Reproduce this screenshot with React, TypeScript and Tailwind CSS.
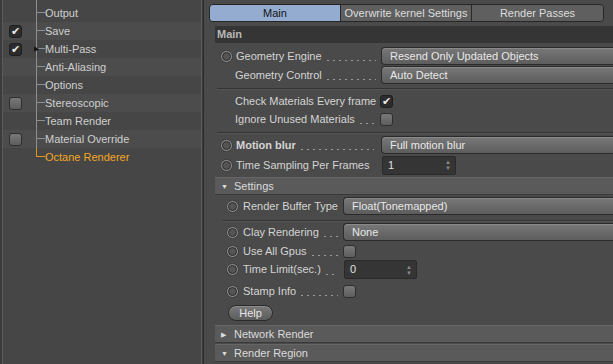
import React from 'react';

const treeItems = [
    { label: 'Output', box: 'none' },
    { label: 'Save', box: 'checked' },
    { label: 'Multi-Pass', box: 'checked', arrow: true },
    { label: 'Anti-Aliasing', box: 'none' },
    { label: 'Options', box: 'none' },
    { label: 'Stereoscopic', box: 'off' },
    { label: 'Team Render', box: 'none' },
    { label: 'Material Override', box: 'off' },
    { label: 'Octane Renderer', box: 'none', active: true },
];

const CheckOn = () => (
    <span className="flex h-[13px] w-[13px] items-center justify-center rounded-[3px] border border-[#1f1f1f] bg-[#2c2c2c] text-[11px] leading-none text-[#e8e8e8]">
        ✔
    </span>
);

const CheckOff = () => (
    <span className="block h-[13px] w-[13px] rounded-[3px] border border-[#2e2e2e] bg-linear-to-b from-[#787878] to-[#5e5e5e]" />
);

const Radio = () => (
    <span className="flex h-[13px] w-[13px] shrink-0 items-center justify-center rounded-full border border-[#3a3a3a] bg-[#8c8c8c]">
        <span className="block h-[9px] w-[9px] rounded-full border border-[#2a2a2a] bg-[#555555]" />
    </span>
);

// leader dots between a label and its control
const Dots = () => (
    <span className="ml-[3px] h-[10px] flex-1 self-end mb-[3px] bg-[radial-gradient(circle,#9a9a9a_0.7px,transparent_1.1px)] bg-[length:6px_3px] bg-bottom-left bg-repeat-x" />
);

const Select = ({ text }: { text: string }) => (
    <div className="flex h-[18px] flex-1 items-center rounded-l-[4px] border border-r-0 border-[#2b2b2b] bg-linear-to-b from-[#787878] to-[#5d5d5d] pl-[8px] text-[#e8e8e8] shadow-[inset_0_1px_0_#8a8a8a]">
        {text}
    </div>
);

const NumberBox = ({ value, width }: { value: string; width: string }) => (
    <div className={`flex h-[19px] ${width} items-center justify-between rounded-[2px] border border-[#2a2a2a] bg-[#353535] pl-[5px] pr-[4px] text-[#e0e0e0]`}>
        <span>{value}</span>
        <span className="flex flex-col items-center text-[6px] leading-[6px] text-[#8a8a8a]">
            <span>▲</span>
            <span>▼</span>
        </span>
    </div>
);

const Separator = ({ inset }: { inset: string }) => (
    <div className={`${inset} border-t border-b border-t-[#333333] border-b-[#555555]`} />
);

const GroupBar = ({ label, open }: { label: string; open: boolean }) => (
    <div className="ml-[11px] flex h-[17px] items-center border-t border-[#666666] bg-[#5a5a5a] pl-[6px] text-[#dadada] shadow-[0_1px_0_#3a3a3a]">
        <span className="w-[10px] text-[7px] leading-none text-[#dcdcdc]">{open ? '▼' : '▶'}</span>
        <span className="ml-[3px]">{label}</span>
    </div>
);

export default function App() {
    return (
        <div className="flex h-[364px] w-[613px] overflow-hidden bg-[#3b3b3b] font-['Liberation_Sans',Arial,sans-serif] text-[11px] text-[#d4d4d4]">
            {/* left tree panel */}
            <div className="w-[203px] pl-[2px]">
                <div className="h-full w-[200px] border-x border-[#5b5b5b] bg-[#464646]">
                    <div className="flex h-[4px]">
                        <span className="w-[33px]" />
                        <span className="border-l border-[#8e8e8e]" />
                    </div>
                    {treeItems.map((item, i) => (
                        <div
                            key={item.label}
                            className={`flex h-[18px] items-center ${i % 2 === 1 ? 'bg-[#4c4c4c]' : ''}`}
                        >
                            <span className="flex w-[33px] items-center pl-[6px]">
                                {item.box === 'checked' && <CheckOn />}
                                {item.box === 'off' && <CheckOff />}
                            </span>
                            <span className="relative flex h-full w-[9px] flex-col">
                                <span className={`h-[9px] border-b border-l ${item.active ? 'border-[#e0961c]' : 'border-[#8e8e8e]'}`} />
                                {!item.active && <span className="h-[9px] border-l border-[#8e8e8e]" />}
                                {item.arrow && (
                                    <span className="absolute left-[-2px] top-[5px] text-[7px] leading-none text-[#151515]">▶</span>
                                )}
                            </span>
                            <span className={item.active ? 'text-[#f5a623]' : 'text-[#cfcfcf]'}>{item.label}</span>
                        </div>
                    ))}
                </div>
            </div>

            {/* right settings panel */}
            <div className="flex w-[410px] flex-col border-l border-[#2b2b2b] bg-[#4a4a4a] pt-[4px]">
                <div className="ml-[5px] mr-[9px] flex h-[18px] overflow-hidden rounded-[4px] border border-[#262626]">
                    <div className="flex w-[130px] items-center justify-center bg-[#93acd0] text-[#141414]">Main</div>
                    <div className="flex w-[131px] items-center justify-center border-l border-[#2a2a2a] bg-[#5f5f5f] text-[#dddddd]">Overwrite kernel Settings</div>
                    <div className="flex flex-1 items-center justify-center border-l border-[#2a2a2a] bg-[#5f5f5f] text-[#dddddd]">Render Passes</div>
                </div>

                <div className="ml-[11px] mt-[4px] flex h-[17px] items-center bg-[#353535] pl-[2px] font-bold text-[#b8b8b8]">Main</div>

                <div className="mt-[4px] flex h-[18px] items-center pl-[16px]">
                    <div className="flex h-full w-[161px] items-center pr-[5px]">
                        <Radio />
                        <span className="ml-[3px]">Geometry Engine</span>
                        <Dots />
                    </div>
                    <Select text="Resend Only Updated Objects" />
                </div>
                <div className="mt-[1px] flex h-[18px] items-center pl-[16px]">
                    <div className="flex h-full w-[161px] items-center pl-[15px] pr-[5px]">
                        <span>Geometry Control</span>
                        <Dots />
                    </div>
                    <Select text="Auto Detect" />
                </div>

                <div className="mt-[4px]"><Separator inset="ml-[13px]" /></div>

                <div className="mt-[2px] flex h-[18px] items-center pl-[31px]">
                    <span className="w-[145px]">Check Materials Every frame</span>
                    <CheckOn />
                </div>
                <div className="flex h-[18px] items-center pl-[31px]">
                    <span className="flex h-full w-[145px] items-center pr-[5px]">
                        <span>Ignore Unused Materials</span>
                        <Dots />
                    </span>
                    <CheckOff />
                </div>

                <div className="mt-[4px]"><Separator inset="ml-[13px]" /></div>

                <div className="mt-[2px] flex h-[18px] items-center pl-[16px]">
                    <div className="flex h-full w-[161px] items-center pr-[7px]">
                        <Radio />
                        <span className="ml-[3px] font-bold">Motion blur</span>
                        <Dots />
                    </div>
                    <Select text="Full motion blur" />
                </div>
                <div className="mt-[2px] flex h-[18px] items-center pl-[16px]">
                    <div className="flex w-[162px] items-center">
                        <Radio />
                        <span className="ml-[3px]">Time Sampling Per Frames</span>
                    </div>
                    <NumberBox value="1" width="w-[74px]" />
                </div>

                <div className="mt-[3px]"><GroupBar label="Settings" open /></div>

                <div className="mt-[3px] flex h-[18px] items-center pl-[22px]">
                    <div className="flex w-[117px] items-center">
                        <Radio />
                        <span className="ml-[4px]">Render Buffer Type</span>
                    </div>
                    <Select text="Float(Tonemapped)" />
                </div>

                <div className="mt-[5px]"><Separator inset="ml-[19px]" /></div>

                <div className="mt-[1px] flex h-[18px] items-center pl-[22px]">
                    <div className="flex h-full w-[117px] items-center pr-[5px]">
                        <Radio />
                        <span className="ml-[4px]">Clay Rendering</span>
                        <Dots />
                    </div>
                    <Select text="None" />
                </div>
                <div className="mt-[1px] flex h-[18px] items-center pl-[22px]">
                    <div className="flex h-full w-[117px] items-center pr-[5px]">
                        <Radio />
                        <span className="ml-[4px]">Use All Gpus</span>
                        <Dots />
                    </div>
                    <CheckOff />
                </div>
                <div className="flex h-[19px] items-center pl-[22px]">
                    <div className="flex h-full w-[118px] items-center pr-[6px]">
                        <Radio />
                        <span className="ml-[4px]">Time Limit(sec.)</span>
                        <Dots />
                    </div>
                    <NumberBox value="0" width="w-[73px]" />
                </div>
                <div className="mt-[3px] flex h-[18px] items-center pl-[22px]">
                    <div className="flex h-full w-[117px] items-center pr-[5px]">
                        <Radio />
                        <span className="ml-[4px]">Stamp Info</span>
                        <Dots />
                    </div>
                    <CheckOff />
                </div>

                <div className="mt-[5px] pl-[24px]">
                    <button className="flex h-[16px] w-[45px] items-center justify-center rounded-full border border-[#2a2a2a] bg-linear-to-b from-[#7a7a7a] to-[#5c5c5c] text-[#e6e6e6] shadow-[inset_0_1px_0_#8c8c8c]">
                        Help
                    </button>
                </div>

                <div className="mt-[4px]"><GroupBar label="Network Render" open={false} /></div>
                <div className="mt-[2px]"><GroupBar label="Render Region" open /></div>
            </div>
        </div>
    );
}
